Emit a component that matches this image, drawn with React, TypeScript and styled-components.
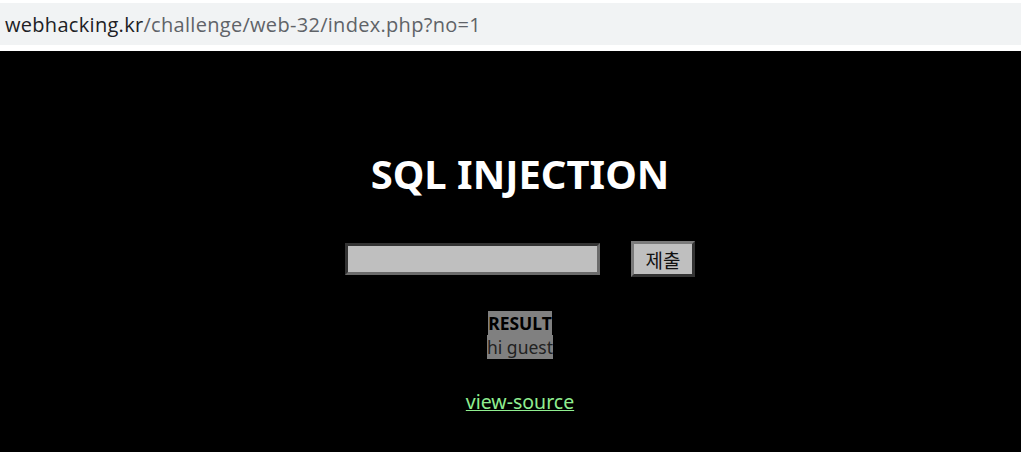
import React from "react";
import styled, { createGlobalStyle } from "styled-components";

const Global = createGlobalStyle`
  html, body { margin: 0; padding: 0; background: #000; }
  body { font-family: "Noto Sans", "Noto Sans CJK KR", sans-serif; }
`;

const Page = styled.div`
  width: 1021px;
  height: 452px;
  background: #000;
  display: flex;
  flex-direction: column;
  overflow: hidden;
`;

const AddressStrip = styled.div`
  height: 51px;
  background: #fff;
  padding-top: 3px;
  box-sizing: border-box;
`;

const AddressBar = styled.div`
  height: 42px;
  background: #f1f3f4;
  display: flex;
  align-items: center;
  padding-left: 5px;
  font-family: "Open Sans", "Noto Sans", sans-serif;
  font-size: 20px;
  color: #5f6368;
  letter-spacing: 0.3px;
`;

const Host = styled.span`
  color: #202124;
`;

const Content = styled.div`
  flex: 1;
  display: flex;
  flex-direction: column;
  align-items: center;
  padding-left: 19px;
  color: #fff;
  font-family: "Noto Sans", "Noto Sans CJK KR", sans-serif;
`;

const Title = styled.h1`
  margin: 96px 0 0;
  font-size: 40px;
  font-weight: 700;
  line-height: 54px;
  color: #fff;
`;

const Form = styled.form`
  margin-top: 40px;
  display: flex;
  align-items: center;
  gap: 31px;
`;

const TextInput = styled.input`
  width: 255px;
  height: 32px;
  box-sizing: border-box;
  background: #bfbfbf;
  border: 3px solid;
  border-color: #333 #6b6b6b #6b6b6b #333;
  outline: none;
`;

const Submit = styled.button`
  width: 64px;
  height: 36px;
  box-sizing: border-box;
  background: #bfbfbf;
  border: 3px solid;
  border-color: #7a7a7a #333 #333 #7a7a7a;
  font-family: "Noto Sans CJK KR", sans-serif;
  font-size: 19px;
  color: #111;
  padding: 0;
  line-height: 1;
`;

const Result = styled.div`
  margin-top: 34px;
  display: flex;
  flex-direction: column;
  align-items: center;
  font-size: 17.5px;
  line-height: 24px;
`;

const Label = styled.span`
  background: #808080;
  color: #000;
  font-weight: 700;
`;

const Value = styled.span`
  background: #808080;
  color: #222;
`;

const Link = styled.a`
  margin-top: 29px;
  color: #90ee90;
  font-size: 19.5px;
  text-decoration: underline;
`;

export default function App() {
  return (
    <>
      <Global />
      <Page>
        <AddressStrip>
          <AddressBar>
            <Host>webhacking.kr</Host>/challenge/web-32/index.php?no=1
          </AddressBar>
        </AddressStrip>
        <Content>
          <Title>SQL INJECTION</Title>
          <Form onSubmit={(e) => e.preventDefault()}>
            <TextInput type="text" />
            <Submit type="submit">제출</Submit>
          </Form>
          <Result>
            <Label>RESULT</Label>
            <Value>hi guest</Value>
          </Result>
          <Link href="#">view-source</Link>
        </Content>
      </Page>
    </>
  );
}
